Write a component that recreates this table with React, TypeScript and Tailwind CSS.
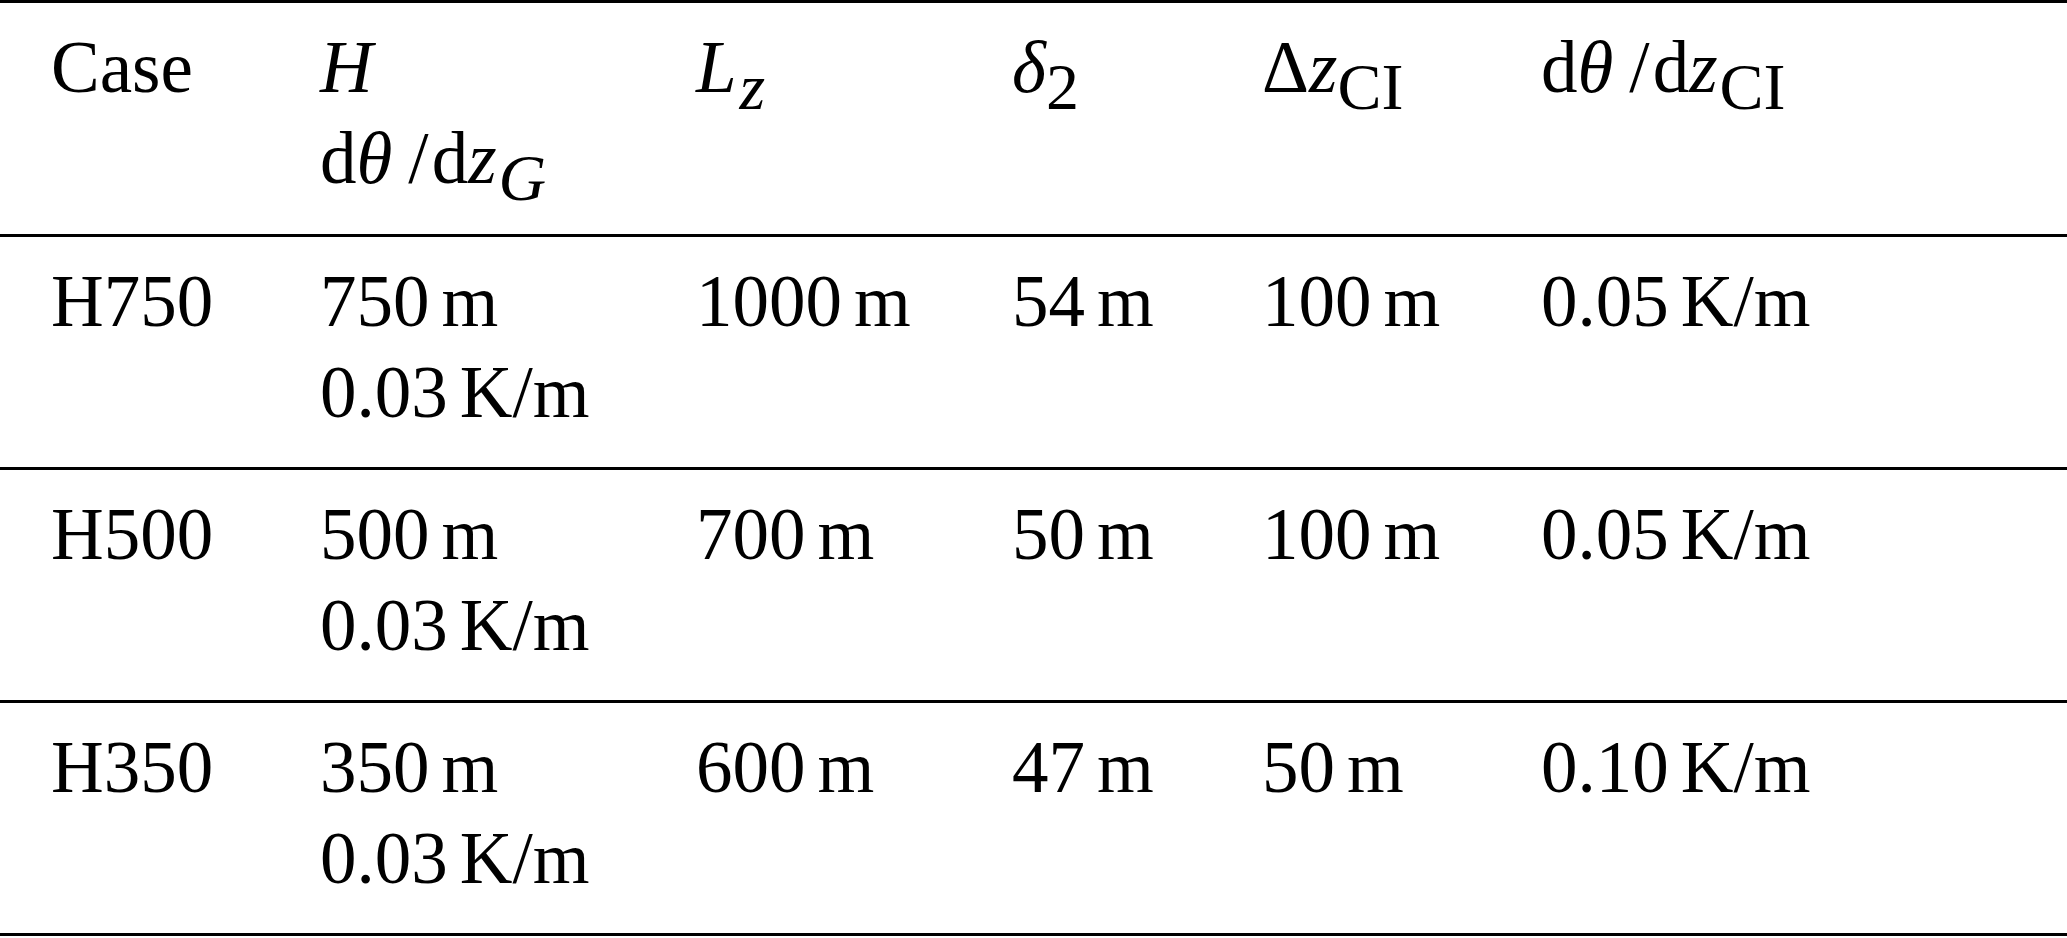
const serif = { fontFamily: '"Liberation Serif", "Times New Roman", serif' }

function Sub({ children, italic }: { children: React.ReactNode; italic?: boolean }) {
  return (
    <span className={'relative top-[17px] text-[66px] leading-none ' + (italic ? 'italic' : '')}>{children}</span>
  )
}

function Q({ n, u }: { n: string; u: string }) {
  return (
    <>
      {n}
      <span className="ml-[12px]">{u}</span>
    </>
  )
}

function Grad({ sub, italicSub }: { sub: string; italicSub?: boolean }) {
  return (
    <span className="whitespace-nowrap">
      d<i>θ</i>
      <span className="ml-[16px] mr-[3px]">/</span>d<i className="mr-[2px]">z</i>
      <Sub italic={italicSub}>{sub}</Sub>
    </span>
  )
}

interface RowData {
  name: string
  h: string
  lz: string
  d2: string
  dz: string
  grad: string
}

const rows: RowData[] = [
  { name: 'H750', h: '750', lz: '1000', d2: '54', dz: '100', grad: '0.05' },
  { name: 'H500', h: '500', lz: '700', d2: '50', dz: '100', grad: '0.05' },
  { name: 'H350', h: '350', lz: '600', d2: '47', dz: '50', grad: '0.10' },
]

const gridCls = 'grid grid-cols-[320px_376px_316px_250px_279px_1fr] border-t-[3px] border-black pt-[19px] leading-[91px]'

export default function App() {
  return (
    <div className="min-h-screen bg-white text-black text-[73px]" style={serif}>
      <div className="w-full">
        <div className={gridCls + ' pb-[30px]'}>
          <div className="pl-[51px]">Case</div>
          <div>
            <div><i>H</i></div>
            <div><Grad sub="G" italicSub /></div>
          </div>
          <div><i className="mr-[3px]">L</i><Sub italic>z</Sub></div>
          <div><i>δ</i><Sub>2</Sub></div>
          <div>Δ<i>z</i><Sub>CI</Sub></div>
          <div><Grad sub="CI" /></div>
        </div>
        {rows.map((r) => (
          <div key={r.name} className={gridCls + ' pb-[29px]'}>
            <div className="pl-[51px]">{r.name}</div>
            <div>
              <div><Q n={r.h} u="m" /></div>
              <div><Q n="0.03" u="K/m" /></div>
            </div>
            <div><Q n={r.lz} u="m" /></div>
            <div><Q n={r.d2} u="m" /></div>
            <div><Q n={r.dz} u="m" /></div>
            <div><Q n={r.grad} u="K/m" /></div>
          </div>
        ))}
        <div className="border-t-[3px] border-black" />
      </div>
    </div>
  )
}
